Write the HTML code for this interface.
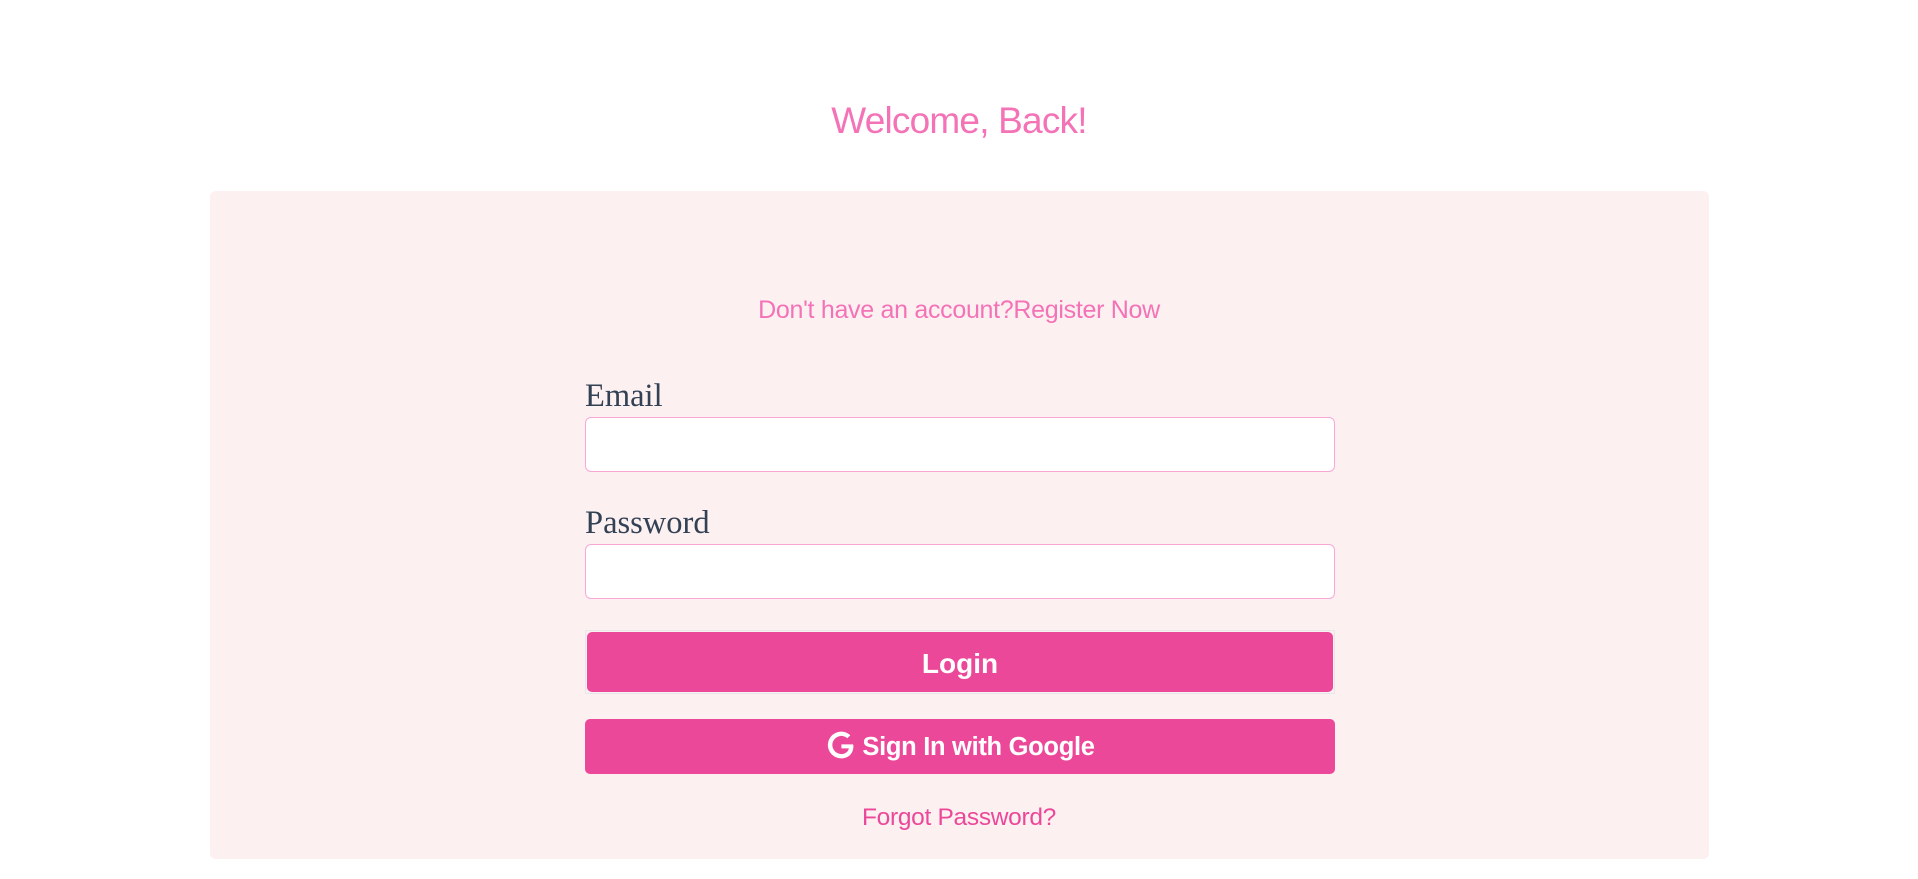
<!DOCTYPE html>
<html><head><meta charset="utf-8"><style>
body{margin:0;background:#fff;font-family:"Liberation Sans",sans-serif;width:1918px;height:879px;position:relative;overflow:hidden}
.t{position:absolute;left:0;width:1918px;text-align:center}
h1{position:absolute;left:0;width:1918px;text-align:center;top:97px;margin:0;font-weight:400;font-size:37px;color:#f472b6;letter-spacing:-0.8px;line-height:48px}
.card{position:absolute;left:210px;top:191px;width:1499px;height:668px;background:#fdf0f1;border-radius:6px}
.lab{position:absolute;left:585px;font-family:"Liberation Serif",serif;font-size:32.5px;color:#334155;line-height:36px}
.inp{position:absolute;left:585px;width:748px;height:53px;background:#fff;border:1px solid #f9a8d4;border-radius:6px}
.btn{position:absolute;left:585px;width:750px;background:#ec4899;color:#fff;font-weight:700;text-align:center;border-radius:5px}
</style></head><body>
<h1>Welcome, Back!</h1>
<div class="card"></div>
<div class="t" style="top:295px;font-size:25px;color:#f472b6;line-height:30px;letter-spacing:-0.3px">Don't have an account?Register Now</div>
<div class="lab" style="top:378px">Email</div>
<div class="inp" style="top:417px"></div>
<div class="lab" style="top:505px">Password</div>
<div class="inp" style="top:544px"></div>
<div style="position:absolute;left:585px;top:630px;width:748px;height:62px;border:1px solid #e5e7eb"></div>
<div class="btn" style="left:587px;top:632px;width:746px;height:60px;line-height:64px;font-size:28px">Login</div>
<div class="btn" style="top:719px;height:55px;line-height:57px;font-size:25.5px;letter-spacing:-0.3px">
<svg width="32" height="32" viewBox="0 0 24 24" style="vertical-align:-6px;margin-right:5px"><path d="M21 11.5H12.3v3h5.6c-.6 2.8-3 4.3-5.6 4.3a6.8 6.8 0 1 1 4.5-11.9l2.2-2.2A10 10 0 1 0 12.3 22c5.2 0 9-3.6 9-9.1 0-.5 0-.9-.3-1.4z" fill="#fff"/></svg>Sign In with Google</div>
<div class="t" style="top:803px;font-size:24.5px;color:#ec4899;line-height:30px;letter-spacing:-0.3px">Forgot Password?</div>
</body></html>
